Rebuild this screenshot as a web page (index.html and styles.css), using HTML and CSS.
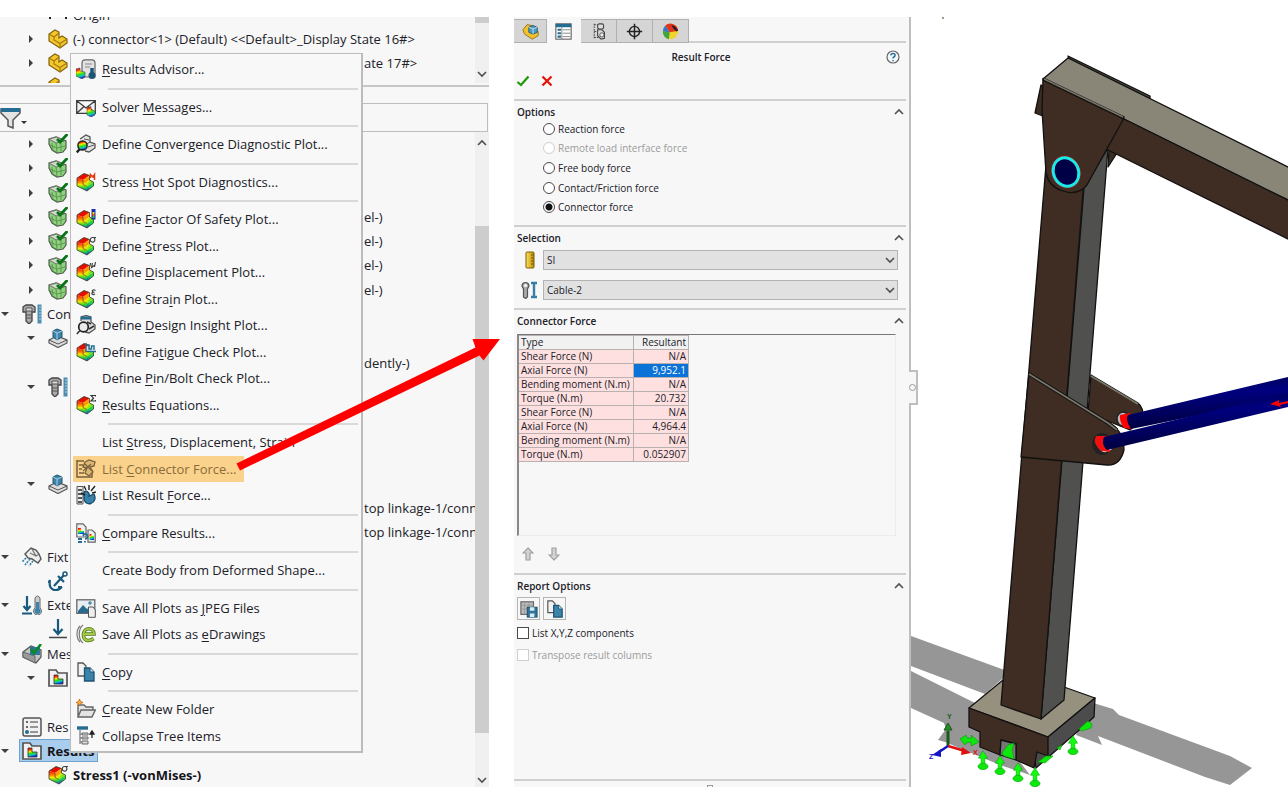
FILE: index.html
```html
<!DOCTYPE html>
<html lang="en">
<head>
<meta charset="utf-8">
<meta name="viewport" content="width=device-width, initial-scale=1">
<title>Result Force</title>
<link rel="stylesheet" href="styles.css">
</head>
<body>
<svg class="sprite" width="0" height="0" aria-hidden="true">
  <defs>
    <linearGradient id="rain" x1="0" y1="0" x2="0.25" y2="1">
      <stop offset="0.05" stop-color="#e80c00"/><stop offset="0.25" stop-color="#ff3c00"/><stop offset="0.42" stop-color="#ffe600"/><stop offset="0.64" stop-color="#27e01c"/><stop offset="0.82" stop-color="#14c8b4"/><stop offset="1" stop-color="#1238e0"/>
    </linearGradient>
    <linearGradient id="rain-side" x1="0" y1="0" x2="0" y2="1">
      <stop offset="0" stop-color="#f01400"/><stop offset="0.3" stop-color="#ff7a00"/><stop offset="0.5" stop-color="#f4e600"/><stop offset="0.75" stop-color="#2bd62b"/><stop offset="1" stop-color="#1050d8"/>
    </linearGradient>
    <linearGradient id="rain-step" x1="0" y1="0" x2="1" y2="0.4">
      <stop offset="0" stop-color="#ffe600"/><stop offset="0.5" stop-color="#d8ee00"/><stop offset="1" stop-color="#2fd81e"/>
    </linearGradient>
    <linearGradient id="rain-front" x1="0" y1="0" x2="0" y2="1">
      <stop offset="0" stop-color="#52e000"/><stop offset="0.5" stop-color="#14cf5a"/><stop offset="1" stop-color="#1238e0"/>
    </linearGradient>
    <linearGradient id="gold" x1="0" y1="0" x2="1" y2="0"><stop offset="0" stop-color="#ffe45c"/><stop offset="1" stop-color="#b98a00"/></linearGradient>
    <linearGradient id="cable" x1="0" y1="0" x2="0.2" y2="1"><stop offset="0" stop-color="#000046"/><stop offset="0.4" stop-color="#000080"/><stop offset="1" stop-color="#00003c"/></linearGradient>
  </defs>
  <symbol id="right" viewBox="0 0 8 8"><path d="M2 0 6 4 2 8Z" fill="#404040"/></symbol>
  <symbol id="down" viewBox="0 0 8 8"><path d="M0 2H8L4 6Z" fill="#404040"/></symbol>
  <symbol id="chev-up" viewBox="0 0 10 10"><path d="M1 7 5 3 9 7" fill="none" stroke="#505050" stroke-width="1.600"/></symbol>
  <symbol id="chev-down" viewBox="0 0 10 10"><path d="M1 3 5 7 9 3" fill="none" stroke="#505050" stroke-width="1.600"/></symbol>
  <symbol id="cube" viewBox="0 0 20 20">
    <path d="M1 6 8 1.500 13.500 3.500 7 8Z" fill="#e80c00"/>
    <path d="M1 6 7 8V12.500L11 14.500V19L1 14Z" fill="url(#rain-side)"/>
    <path d="M7 8 13.500 3.500V8L7 12.500Z" fill="#ff9a00"/>
    <path d="M7 12.500 13.500 8 17.500 10 11 14.500Z" fill="url(#rain-step)"/>
    <path d="M11 14.500 17.500 10V14L11 19Z" fill="url(#rain-front)"/>
    <path d="M1 6 8 1.500 13.500 3.500V8L17.500 10V14L11 19 1 14Z" fill="none" stroke="#3a3a2a" stroke-width="0.800"/>
    <path d="M7 8V12.500L11 14.500" fill="none" stroke="#55480a" stroke-width="0.700"/>
  </symbol>
  <symbol id="cube-safety" viewBox="0 0 20 20"><use href="#cube"/><rect x="15.500" y="0" width="4" height="10.500" fill="#1a2fb0"/><path d="M16.500 3h2v2h-2z" fill="#ffd000"/><path d="M16.500 5h2v2h-2z" fill="#ff5a00"/><path d="M16.500 7h2v2h-2z" fill="#3c3"/></symbol>
  <symbol id="cube-sigma" viewBox="0 0 20 20"><use href="#cube"/><path d="M20 1.500H16.500A2.300 2.300 0 1 0 18 2" fill="none" stroke="#444" stroke-width="1.200"/></symbol>
  <symbol id="cube-u" viewBox="0 0 20 20"><use href="#cube"/><path d="M14.500 1 14 4.500M16.500 1 15.500 5.500 19 3M19.500 0 18.500 5" fill="none" stroke="#444" stroke-width="1.200"/></symbol>
  <symbol id="cube-e" viewBox="0 0 20 20"><use href="#cube"/><path d="M19.500 1.500C17 0 15 2 17.500 3.200 14.500 3.800 16 6.500 19 5" fill="none" stroke="#444" stroke-width="1.200"/></symbol>
  <symbol id="cube-sum" viewBox="0 0 20 20"><use href="#cube"/><path d="M19.500 1.500V.500H15L17.500 3.200 15 6H19.500V5" fill="none" stroke="#333" stroke-width="1.200"/></symbol>
  <symbol id="cube-hot" viewBox="0 0 20 20"><use href="#cube"/><path d="M14.500 6V2.500L17 5 18.500 2.500V8" fill="none" stroke="#e33a12" stroke-width="1.500"/></symbol>
  <symbol id="cube-fatigue" viewBox="0 0 20 20"><use href="#cube"/><path d="M10 1V10H20V4H10Z" fill="#e4eef3" opacity=".85"/><path d="M10 1V9.500H20M11 3H13V7H15.500V4H18V8" fill="none" stroke="#246c91" stroke-width="1.400"/></symbol>
  <symbol id="advisor" viewBox="0 0 20 20"><path d="M6 18V4Q6 .8 9 .8H16Q19 .8 19 4V18Z" fill="#e2e2e2" stroke="#666" stroke-width="1.200"/><path d="M9 5H16M9 8H14" stroke="#888"/><path d="M16 9V16" stroke="#1d5674" stroke-width="3.500"/><circle cx="16" cy="16.500" r="3.500" fill="#1d5674"/><path d="M0 10 4 9V12L9 13 9 18 6 20 0 17Z" fill="url(#rain)" stroke="#444" stroke-width=".6"/></symbol>
  <symbol id="mail" viewBox="0 0 20 20"><path d="M.7 3.700H19.300V16.300H.7ZM.7 3.700 10 11 19.300 3.700M.7 16.300 8 9.500M19.300 16.300 12 9.500" fill="#f2f2f2" stroke="#3d3d3d" stroke-width="1.300"/><path d="M11 11 15 9.500V13L19 14V18L15 20 11 18Z" fill="url(#rain)" stroke="#444" stroke-width=".5"/></symbol>
  <symbol id="converge" viewBox="0 0 20 20"><path d="M4 5 10 1 14 3V8L19 10V14L13 18 9 17" fill="#e3e3e3" stroke="#555" stroke-width="1.300"/><path d="M8 5 13 6M14 8 9 11M12 13 18 11" stroke="#555"/><circle cx="6.500" cy="11.500" r="4.600" fill="url(#rain)" stroke="#222" stroke-width="1.500"/><path d="M3.800 15 .8 18.500" stroke="#222" stroke-width="2.400"/></symbol>
  <symbol id="insight" viewBox="0 0 20 20"><path d="M5 6 5 2 10 .5 15 2V7L19 10V14L13 18 9 17" fill="#ddd" stroke="#555" stroke-width="1.300"/><path d="M5 3H15" stroke="#246c91" stroke-width="3"/><circle cx="7.500" cy="12" r="4.800" fill="#eaeaea" stroke="#222" stroke-width="1.700"/><path d="M4 15.500.8 19M11 7 15 9M13 14 18 11" stroke="#333" stroke-width="1.500"/></symbol>
  <symbol id="list-conn" viewBox="0 0 20 20"><path d="M1 2H8M1 1V18H16V14M3 6H7M3 10H6M3 14H8" fill="none" stroke="#75603a" stroke-width="1.500"/><path d="M9 3 13 1 19 3 18 7 14 8 17 13 13 17 9 14 11 9 7 8Z" fill="#e0b873" stroke="#75603a" stroke-width="1.300"/><path d="M7 12 15 5M9 5 16 12" stroke="#75603a" stroke-width="1.200"/></symbol>
  <symbol id="list-result" viewBox="0 0 20 20"><path d="M1 1.500H7V19H1Z" fill="#eee" stroke="#555"/><path d="M2 5H6M2 9H6M2 13H6M2 17H6" stroke="#222" stroke-width="1.500"/><path d="M8 7C11 4 14 9 13 11L18 9C20 13 19 17 15 18.500 11 19.500 8 17 8 14Z" fill="#3680ab" stroke="#174b68" stroke-width="1.300"/><path d="M8 1 10 5M13 0V5M19 1 15 6M5 8 9 10M20 7 16 8" stroke="#222" stroke-width="1.400"/></symbol>
  <symbol id="compare" viewBox="0 0 20 20"><path d="M.8.8H7L10 4V14H.8ZM12 7H16L19.200 10V19.200H12Z" fill="#eee" stroke="#666" stroke-width="1.200"/><path d="M2 5H5V8H8V11H2Z" fill="url(#rain)"/><path d="M13.500 11H15.500V13H18V17H13.500Z" fill="url(#rain)"/><path d="M7 13Q9 9 11 12T9 16M9 18V19.500M2 16H6M2 19H6" fill="none" stroke="#246c91" stroke-width="1.800"/></symbol>
  <symbol id="picture" viewBox="0 0 20 20"><rect x=".8" y="1.800" width="18" height="13.500" fill="#e6eef2" stroke="#666" stroke-width="1.300"/><path d="M2 13 7 7 11 11 14 9V15H2Z" fill="#286a8e"/><path d="M14 3V7M12 5H16" stroke="#286a8e"/><path d="M12.500 9H17L19.300 12V19.300H12.500Z" fill="#eee" stroke="#555"/></symbol>
  <symbol id="edraw" viewBox="0 0 20 20"><path d="M4 2C0 6 0 14 4 18M7 1C2 5 2 15 7 19" fill="none" stroke="#777" stroke-width="1.200"/><path d="M8 10H18C18 3 8 3 7.500 10S13 18 17.500 14.500" fill="none" stroke="#527a19" stroke-width="3.600"/><path d="M8 10H18C18 3 8 3 7.500 10S13 18 17.500 14.500" fill="none" stroke="#a3c94c" stroke-width="2"/></symbol>
  <symbol id="copy" viewBox="0 0 20 20"><path d="M2 1H7L10 4V14H2Z" fill="#f1f1f1" stroke="#555" stroke-width="1.300"/><path d="M8.500 6H14L18 10V19H8.500Z" fill="#3b83aa" stroke="#1d5370" stroke-width="1.300"/><path d="M14 6V10H18" fill="#cfe4ef" stroke="#1d5370"/></symbol>
  <symbol id="folder" viewBox="0 0 20 20"><path d="M2 18V6H8L10 8H17V11M2 18 5 11H19.300L16 18Z" fill="#e3e3e3" stroke="#666" stroke-width="1.400"/><path d="M3.500 0 4.500 2.500 7 3.500 4.500 4.500 3.500 7 2.500 4.500 0 3.500 2.500 2.500Z" fill="#ffb22e" stroke="#bc631b" stroke-width=".8"/></symbol>
  <symbol id="collapse" viewBox="0 0 20 20"><path d="M1 2H12" stroke="#246c91" stroke-width="3.400"/><path d="M4 4V18M4 8H11M4 12H11M4 16H11" stroke="#777" stroke-width="1.200"/><path d="M6 7H12V9H6ZM6 11H12V13H6ZM6 15H12V18H6Z" fill="#ddd" stroke="#666"/><path d="M16 12V6M14 8 16 5 18 8Z" stroke="#222" stroke-width="1.300"/></symbol>
  <symbol id="part" viewBox="0 0 20 20"><path d="M1 8V5L7 1 11 3V9L14 7 19 10V14L12 19 1 12Z" fill="#f6c72c" stroke="#81620b" stroke-width="1.200"/><path d="M1 5 6 8 11 4M6 8V11L12 14.500 19 10M12 14.500V19" fill="none" stroke="#a17b10" stroke-width="1.200"/></symbol>
  <symbol id="origin" viewBox="0 0 20 20"><path d="M2 10H18M2 6V14M18 6V14" stroke="#222" stroke-width="2"/></symbol>
  <symbol id="body" viewBox="0 0 20 20"><path d="M1 5 8 3 18 7V14L15 18 9 19 4 16 1 10Z" fill="#8fd07f" stroke="#4f5e4b" stroke-width="1.200"/><path d="M1 5 9 3 16 7 8 9Z" fill="#cfd8cb" stroke="#6a7566"/><path d="M4 9 5 15M8 9 9 18M13 8V17M2 11 9 14 17 12" fill="none" stroke="#5c9a50" stroke-width="1"/><path d="M9 5 12 8 19.500 0" fill="none" stroke="#077516" stroke-width="2.800"/></symbol>
  <symbol id="bolt" viewBox="0 0 20 20"><path d="M1 3 4 1H10L13 3V8H10V17L7 20 4 17V8H1Z" fill="#aaa" stroke="#444" stroke-width="1.300"/><path d="M4 4H10V7H4ZM4 11H10M4 14H10" fill="#ddd" stroke="#555"/><path d="M17.500.5V19.500" stroke="#4c8db0" stroke-width="4"/><path d="M17 3H19M17 6H19M17 9H19M17 12H19M17 15H19" stroke="#add4e5"/></symbol>
  <symbol id="stamp" viewBox="0 0 20 20"><path d="M1 12 9 8 19 12V15L10 19.500 1 15Z" fill="#ddd" stroke="#555" stroke-width="1.200"/><path d="M1 12 10 16 19 12" fill="none" stroke="#555"/><path d="M5 3 9 1 14 3V9L9 12 5 9Z" fill="#3f83a8" stroke="#1d5370"/><path d="M5 3 9 5 14 3M9 5V12" fill="none" stroke="#a8d1e4"/></symbol>
  <symbol id="fixture" viewBox="0 0 20 20"><path d="M3 7 9 1 14 3 17 7 19 12 16 16 10 12 6 11Z" fill="#eee" stroke="#555" stroke-width="1.400"/><path d="M8 6 14 9M10 2 14 9 17 7" fill="none" stroke="#777" stroke-width="1.300"/><path d="M4 11 0 15M8 12 3 18M11 14 7 19" stroke="#3b83aa" stroke-width="1.700" stroke-dasharray="2 1"/></symbol>
  <symbol id="anchor" viewBox="0 0 20 20"><path d="M16 4 6 15M10 5 16 11M2 9C0 19 8 22 14 16M2 9 .5 12M14 16H10" fill="none" stroke="#175a7d" stroke-width="2.200"/><circle cx="17" cy="3" r="2" fill="none" stroke="#175a7d" stroke-width="1.500"/></symbol>
  <symbol id="loads" viewBox="0 0 20 20"><path d="M5 1V15M1.500 11 5 15 8.500 11M0 18.500H10" fill="none" stroke="#175a7d" stroke-width="2.200"/><path d="M13 3Q15.500-1 18 3V13A4 4 0 1 1 13 13Z" fill="#ccc" stroke="#666"/><path d="M15.500 7V16" stroke="#3b83aa" stroke-width="3"/><circle cx="15.500" cy="16" r="3" fill="#3b83aa"/></symbol>
  <symbol id="arrow-load" viewBox="0 0 20 20"><path d="M10 0V15M5.500 10 10 15 14.500 10" fill="none" stroke="#175a7d" stroke-width="2.200"/><path d="M1 18.500H19" stroke="#444" stroke-width="1.500"/></symbol>
  <symbol id="mesh" viewBox="0 0 20 20"><path d="M1 8 9 2 19 6V13L14 19 1 13Z" fill="#c4c4c4" stroke="#555" stroke-width="1.200"/><path d="M1 8 13 12V19L1 13Z" fill="#9a9a9a" stroke="#666"/><path d="M8 3H18V11H8Z" fill="#2f7599"/><path d="M9 5 12 9 19 0" fill="none" stroke="#0c8a24" stroke-width="2.600"/></symbol>
  <symbol id="resfolder" viewBox="0 0 20 20"><path d="M1 18V2H8L10 5H19V18Z" fill="#f1f1f1" stroke="#555" stroke-width="1.700"/><path d="M6 7H10V11H15V16H6Z" fill="url(#rain)" stroke="#333" stroke-width=".8"/></symbol>
  <symbol id="reslist" viewBox="0 0 20 20"><rect x="1" y="1" width="18" height="18" rx="2" fill="#f1f1f1" stroke="#555" stroke-width="1.500"/><path d="M8 5H16M8 10H16M8 15H16" stroke="#777" stroke-width="1.500"/><path d="M4 4H6V6H4ZM4 9H6V11H4Z" fill="#666"/><circle cx="5" cy="15" r="2" fill="#246c91"/></symbol>
  <symbol id="tab-part" viewBox="0 0 20 20"><path d="M1 8 6 2 12 3 16 9 19 10V15L12 19 3 13Z" fill="#f2c22e" stroke="#8a6a0c"/><path d="M8 5 13 3 18 5V11L13 13 8 11Z" fill="#4a9bc4" stroke="#1d5370"/><path d="M8 5 13 7 18 5M13 7V13" fill="none" stroke="#d0e8f3"/></symbol>
  <symbol id="tab-prop" viewBox="0 0 20 20"><rect x="1" y="1" width="18" height="18" fill="#fff" stroke="#555" stroke-width="1.200"/><path d="M1 3H19" stroke="#246c91" stroke-width="4"/><path d="M3 8H7M3 12H7M3 16H7" stroke="#246c91" stroke-width="2.500"/><path d="M9 8H18M9 12H18M9 16H18M8 5V19" stroke="#777"/></symbol>
  <symbol id="tab-conf" viewBox="0 0 20 20"><path d="M5 1V19M5 2H9M5 10H9M5 17H10" stroke="#555" stroke-width="1.300" stroke-dasharray="2 1"/><rect x="9" y="1" width="7" height="6" rx="2" fill="#ddd" stroke="#444" stroke-width="1.300"/><path d="M9 8H14L17 11V18L13 19 9 15Z" fill="#ddd" stroke="#444" stroke-width="1.300"/><circle cx="14" cy="14" r="2.500" fill="#eee" stroke="#444"/></symbol>
  <symbol id="tab-dim" viewBox="0 0 20 20"><circle cx="10" cy="10" r="6" fill="none" stroke="#222" stroke-width="1.700"/><path d="M10 1V19M1 10H19" stroke="#222" stroke-width="1.800"/></symbol>
  <symbol id="tab-color" viewBox="0 0 20 20"><circle cx="10" cy="10" r="9" fill="#f2d32e"/><path d="M9 11 4 3A9 9 0 0 0 1 10Z" fill="#3478c9"/><path d="M9 11 4 3A9 9 0 0 1 19 9Z" fill="#e2331f"/><path d="M9 11 1 10A9 9 0 0 0 8 19Z" fill="#3fa63c"/><path d="M11 3Q15 2 19 9L17 10Q14 8 11 3Z" fill="#222"/></symbol>
  <symbol id="save" viewBox="0 0 20 20"><rect x="1" y="2" width="14" height="14" fill="#bbb" stroke="#666" stroke-width="1.300"/><path d="M1 6H15M1 10H15M5 2V16M10 2V16" stroke="#999"/><rect x="8" y="8" width="11" height="11" fill="#2f7599" stroke="#174b68"/><path d="M11 8H16V12H11ZM11 15H16V19H11Z" fill="#dcebf3"/></symbol>
  <symbol id="fix-up" viewBox="-7 -12 14 24"><path d="M0-10 5-2H2V6H-2V-2H-5Z" fill="#0dff0d" stroke="#079a07" stroke-width=".6"/><ellipse cy="7" rx="5.500" ry="3.500" fill="#0ce80c" stroke="#079a07" stroke-width=".6"/></symbol>
</svg>

<main class="workspace">
  <section class="study" aria-label="Study tree">
    <div class="assembly">
      <ul class="assembly-rows">
        <li class="row l2"><span class="toggle"></span><svg class="ico"><use href="#origin"/></svg><span>Origin</span></li>
        <li class="row l2"><svg class="toggle"><use href="#right"/></svg><svg class="ico"><use href="#part"/></svg><span>(-) connector&lt;1&gt; (Default) &lt;&lt;Default&gt;_Display State 16#&gt;</span></li>
        <li class="row l2"><svg class="toggle"><use href="#right"/></svg><svg class="ico"><use href="#part"/></svg><span class="tail">ate 17#&gt;</span></li>
        <li class="row l2"><span class="toggle"></span><svg class="ico"><use href="#part"/></svg></li>
      </ul>
      <div class="scroll scroll-top"><span class="thumb"></span><svg class="chev"><use href="#chev-down"/></svg></div>
    </div>
    <div class="splitter"></div>
    <div class="filter">
      <button class="filter-btn" type="button" aria-label="Filter"><svg class="funnel" viewBox="0 0 28 22"><path d="M1 2H20V6L13 13V21L8 19V13L1 6Z" fill="#e4e4e4" stroke="#555" stroke-width="1.500"/><path d="M1 3H20" stroke="#246c91" stroke-width="4"/><path d="M21 14H27L24 17Z" fill="#333"/></svg></button>
      <input class="filter-text" type="text" aria-label="Filter tree">
    </div>
    <div class="tree">
      <ul class="tree-rows">
        <li class="row l2"><svg class="toggle"><use href="#right"/></svg><svg class="ico"><use href="#body"/></svg></li>
        <li class="row l2"><svg class="toggle"><use href="#right"/></svg><svg class="ico"><use href="#body"/></svg></li>
        <li class="row l2"><svg class="toggle"><use href="#right"/></svg><svg class="ico"><use href="#body"/></svg></li>
        <li class="row l2"><svg class="toggle"><use href="#right"/></svg><svg class="ico"><use href="#body"/></svg><span class="tail">el-)</span></li>
        <li class="row l2"><svg class="toggle"><use href="#right"/></svg><svg class="ico"><use href="#body"/></svg><span class="tail">el-)</span></li>
        <li class="row l2"><svg class="toggle"><use href="#right"/></svg><svg class="ico"><use href="#body"/></svg><span class="tail">el-)</span></li>
        <li class="row l2"><svg class="toggle"><use href="#right"/></svg><svg class="ico"><use href="#body"/></svg><span class="tail">el-)</span></li>
        <li class="row l1"><svg class="toggle"><use href="#down"/></svg><svg class="ico"><use href="#bolt"/></svg><span>Con</span></li>
        <li class="row l2"><svg class="toggle"><use href="#down"/></svg><svg class="ico"><use href="#stamp"/></svg></li>
        <li class="row l2"><span class="toggle"></span><span class="ico"></span><span class="tail">dently-)</span></li>
        <li class="row l2"><svg class="toggle"><use href="#down"/></svg><svg class="ico"><use href="#bolt"/></svg></li>
        <li class="row"></li>
        <li class="row"></li>
        <li class="row"></li>
        <li class="row l2"><svg class="toggle"><use href="#down"/></svg><svg class="ico"><use href="#stamp"/></svg></li>
        <li class="row l2"><span class="toggle"></span><span class="ico"></span><span class="tail">top linkage-1/conn</span></li>
        <li class="row l2"><span class="toggle"></span><span class="ico"></span><span class="tail">top linkage-1/conn</span></li>
        <li class="row l1"><svg class="toggle"><use href="#down"/></svg><svg class="ico"><use href="#fixture"/></svg><span>Fixt</span></li>
        <li class="row l2"><span class="toggle"></span><svg class="ico"><use href="#anchor"/></svg></li>
        <li class="row l1"><svg class="toggle"><use href="#down"/></svg><svg class="ico"><use href="#loads"/></svg><span>Exte</span></li>
        <li class="row l2"><span class="toggle"></span><svg class="ico"><use href="#arrow-load"/></svg></li>
        <li class="row l1"><svg class="toggle"><use href="#down"/></svg><svg class="ico"><use href="#mesh"/></svg><span>Mes</span></li>
        <li class="row l2"><svg class="toggle"><use href="#down"/></svg><svg class="ico"><use href="#resfolder"/></svg></li>
        <li class="row"></li>
        <li class="row l1"><span class="toggle"></span><svg class="ico"><use href="#reslist"/></svg><span>Res</span></li>
        <li class="row l1"><svg class="toggle"><use href="#down"/></svg><span class="picked"><svg class="ico"><use href="#resfolder"/></svg><span>Results</span></span></li>
        <li class="row l2 strong"><span class="toggle"></span><svg class="ico"><use href="#cube-sigma"/></svg><span>Stress1 (-vonMises-)</span></li>
      </ul>
      <div class="scroll scroll-main"><svg class="chev"><use href="#chev-up"/></svg><div class="track"><span class="gap-top"></span><span class="thumb"></span><span class="gap-bottom"></span></div><svg class="chev"><use href="#chev-down"/></svg></div>
    </div>

    <div class="menu" role="menu">
      <button class="item" role="menuitem" type="button"><svg class="mico"><use href="#advisor"/></svg><span><u>R</u>esults Advisor...</span></button>
      <hr>
      <button class="item" role="menuitem" type="button"><svg class="mico"><use href="#mail"/></svg><span>Solver <u>M</u>essages...</span></button>
      <hr>
      <button class="item" role="menuitem" type="button"><svg class="mico"><use href="#converge"/></svg><span>Define C<u>o</u>nvergence Diagnostic Plot...</span></button>
      <hr>
      <button class="item" role="menuitem" type="button"><svg class="mico"><use href="#cube-hot"/></svg><span>Stress <u>H</u>ot Spot Diagnostics...</span></button>
      <hr>
      <button class="item" role="menuitem" type="button"><svg class="mico"><use href="#cube-safety"/></svg><span>Define <u>F</u>actor Of Safety Plot...</span></button>
      <button class="item" role="menuitem" type="button"><svg class="mico"><use href="#cube-sigma"/></svg><span>Define <u>S</u>tress Plot...</span></button>
      <button class="item" role="menuitem" type="button"><svg class="mico"><use href="#cube-u"/></svg><span>Define <u>D</u>isplacement Plot...</span></button>
      <button class="item" role="menuitem" type="button"><svg class="mico"><use href="#cube-e"/></svg><span>Define Stra<u>i</u>n Plot...</span></button>
      <button class="item" role="menuitem" type="button"><svg class="mico"><use href="#insight"/></svg><span>Define <u>D</u>esign Insight Plot...</span></button>
      <button class="item" role="menuitem" type="button"><svg class="mico"><use href="#cube-fatigue"/></svg><span>Define Fa<u>t</u>igue Check Plot...</span></button>
      <button class="item" role="menuitem" type="button"><span class="mico"></span><span>Define <u>P</u>in/Bolt Check Plot...</span></button>
      <button class="item" role="menuitem" type="button"><svg class="mico"><use href="#cube-sum"/></svg><span><u>R</u>esults Equations...</span></button>
      <hr>
      <button class="item" role="menuitem" type="button"><span class="mico"></span><span>List <u>S</u>tress, Displacement, Strain</span></button>
      <button class="item marked" role="menuitem" type="button"><svg class="mico"><use href="#list-conn"/></svg><span>List <u>C</u>onnector Force...</span></button>
      <button class="item" role="menuitem" type="button"><svg class="mico"><use href="#list-result"/></svg><span>List Result <u>F</u>orce...</span></button>
      <hr>
      <button class="item" role="menuitem" type="button"><svg class="mico"><use href="#compare"/></svg><span><u>C</u>ompare Results...</span></button>
      <hr>
      <button class="item" role="menuitem" type="button"><span class="mico"></span><span>Create Body from Deformed Shape...</span></button>
      <hr>
      <button class="item" role="menuitem" type="button"><svg class="mico"><use href="#picture"/></svg><span>Save All Plots as <u>J</u>PEG Files</span></button>
      <button class="item" role="menuitem" type="button"><svg class="mico"><use href="#edraw"/></svg><span>Save All Plots as <u>e</u>Drawings</span></button>
      <hr>
      <button class="item" role="menuitem" type="button"><svg class="mico"><use href="#copy"/></svg><span><u>C</u>opy</span></button>
      <hr>
      <button class="item" role="menuitem" type="button"><svg class="mico"><use href="#folder"/></svg><span><u>C</u>reate New Folder</span></button>
      <button class="item" role="menuitem" type="button"><svg class="mico"><use href="#collapse"/></svg><span>Collapse Tree Items</span></button>
    </div>
    <svg class="pointer" viewBox="236 336 266 136" aria-hidden="true"><path d="M236.500 463.500 475.500 347.500 472.500 339H500L483.500 360.500 479.500 355.500 240 470.500Z" fill="#f00"/></svg>
  </section>

  <section class="props" aria-label="Result Force">
    <nav class="tabs">
      <button class="tab" type="button" aria-label="Model"><svg><use href="#tab-part"/></svg></button>
      <button class="tab active" type="button" aria-label="Properties"><svg><use href="#tab-prop"/></svg></button>
      <button class="tab" type="button" aria-label="Configurations"><svg><use href="#tab-conf"/></svg></button>
      <button class="tab" type="button" aria-label="Dimensions"><svg><use href="#tab-dim"/></svg></button>
      <button class="tab" type="button" aria-label="Appearance"><svg><use href="#tab-color"/></svg></button>
    </nav>
    <header class="head">
      <h1>Result Force</h1>
      <button class="help" type="button" aria-label="Help"><svg viewBox="0 0 14 14"><circle cx="7" cy="7" r="6" fill="#f4f8fa" stroke="#666" stroke-width="1.200"/><path d="M4.800 5.300Q5 3.400 7 3.400T9.100 5.200Q9.100 6.300 7.800 7 7 7.500 7 8.500M7 10V11.300" fill="none" stroke="#2a7096" stroke-width="1.500"/></svg></button>
    </header>
    <div class="confirm">
      <button type="button" aria-label="OK"><svg viewBox="0 0 14 12"><path d="M1.500 7 5 10 12.500 1.500" fill="none" stroke="#219a0b" stroke-width="2.300"/></svg></button>
      <button type="button" aria-label="Cancel"><svg viewBox="0 0 14 12"><path d="M2.500 1.500 11.500 10.500M11.500 1.500 2.500 10.500" stroke="#e3160c" stroke-width="2.300"/></svg></button>
    </div>

    <section class="group">
      <h2>Options<svg><use href="#chev-up"/></svg></h2>
      <div class="radios">
        <label><input type="radio" name="force">Reaction force</label>
        <label class="off"><input type="radio" name="force" disabled>Remote load interface force</label>
        <label><input type="radio" name="force">Free body force</label>
        <label><input type="radio" name="force">Contact/Friction force</label>
        <label><input type="radio" name="force" checked>Connector force</label>
      </div>
    </section>

    <section class="group">
      <h2>Selection<svg><use href="#chev-up"/></svg></h2>
      <div class="pick">
        <svg viewBox="0 0 18 18"><rect x="6" y="1" width="8" height="16" rx="1" fill="url(#gold)" stroke="#7a5c06"/><path d="M11 4H14M11 7H14M11 10H14M11 13H14" stroke="#7a5c06"/></svg>
        <span class="combo"><select aria-label="Units"><option>SI</option></select><svg><use href="#chev-down"/></svg></span>
      </div>
      <div class="pick">
        <svg viewBox="0 0 18 18"><path d="M2 5A3 3 0 1 1 9 5L7.500 8V16L5.500 17.500 3.500 16V8Z" fill="#aaa" stroke="#555" stroke-width="1.200"/><circle cx="5.500" cy="4.500" r="1.500" fill="#fff"/><path d="M11 2H17M11 16H17M14 2V16" stroke="#3680a5" stroke-width="2.400"/></svg>
        <span class="combo"><select aria-label="Connector"><option>Cable-2</option></select><svg><use href="#chev-down"/></svg></span>
      </div>
    </section>

    <section class="group">
      <h2>Connector Force<svg><use href="#chev-up"/></svg></h2>
      <div class="listbox">
        <table>
          <thead><tr><th>Type</th><th>Resultant</th></tr></thead>
          <tbody>
            <tr><td>Shear Force (N)</td><td>N/A</td></tr>
            <tr><td>Axial Force (N)</td><td class="sel">9,952.1</td></tr>
            <tr><td>Bending moment (N.m)</td><td>N/A</td></tr>
            <tr><td>Torque (N.m)</td><td>20.732</td></tr>
          </tbody>
          <tbody>
            <tr><td>Shear Force (N)</td><td>N/A</td></tr>
            <tr><td>Axial Force (N)</td><td>4,964.4</td></tr>
            <tr><td>Bending moment (N.m)</td><td>N/A</td></tr>
            <tr><td>Torque (N.m)</td><td>0.052907</td></tr>
          </tbody>
        </table>
      </div>
      <div class="movers">
        <button type="button" aria-label="Previous"><svg viewBox="0 0 12 14"><path d="M6 1 11 6H8V13H4V6H1Z" fill="#d4d4d4" stroke="#a0a0a0" stroke-width="1.200"/></svg></button>
        <button type="button" aria-label="Next"><svg viewBox="0 0 12 14"><path d="M6 13 11 8H8V1H4V8H1Z" fill="#d4d4d4" stroke="#a0a0a0" stroke-width="1.200"/></svg></button>
      </div>
    </section>

    <section class="group">
      <h2>Report Options<svg><use href="#chev-up"/></svg></h2>
      <div class="report-btns">
        <button type="button" aria-label="Save"><svg><use href="#save"/></svg></button>
        <button type="button" aria-label="Copy"><svg><use href="#copy"/></svg></button>
      </div>
      <label class="check"><input type="checkbox">List X,Y,Z components</label>
      <label class="check off"><input type="checkbox" disabled>Transpose result columns</label>
    </section>
    <footer class="foot"><span></span></footer>
    <button class="flap" type="button" aria-label="Collapse panel"></button>
  </section>

  <section class="view" aria-label="Model view">
    <svg class="model" viewBox="911 17 377 770" preserveAspectRatio="xMinYMin slice">
      <path d="M942 17h2v2h-2z" fill="#a89884"/>
      <g fill="#969696">
        <path d="M911 636 1010 672 985 694 911 666Z"/>
        <path d="M911 671 975 703 1030 775 1000 765 945 742 938 740 946 729 944 723 911 708Z"/>
        <path d="M1090 702 1113 709 1119 715 1230 756 1252 768 1230 785 1205 777 1098 736 1102 745 1076 735Z"/>
      </g>
      <g stroke="#111" stroke-width="1.300" stroke-linejoin="round">
        <path d="M1035 113 1041 85 1050 90 1048 118Z" fill="#3d2c22"/>
        <path d="M1109 150 1117 153 1108 167Z" fill="#3d2c22"/>
        <path d="M969 708 1003 680 1064 687 1095 698 1048 737Z" fill="#96907e"/>
        <path d="M1048 737 1095 698 1094 717 1036 768 1034 753Z" fill="#4c4c4c"/>
        <path d="M1034 768 1037 752 1048 756V737L969 708V727L980 732V747L1000 755 1001 740 1016 744V760Z" fill="#3f2c22"/>
        <path d="M1001 740 1016 744V760L1000 755Z" fill="#777"/>
        <path d="M1084 188 1108 148 1064 700 1041 719Z" fill="#50504e"/>
        <path d="M1046 165 1084 180 1041 719 1001 705Z" fill="#3f2c22"/>
        <path d="M1068 56 1150 96V100L1070 62Z" fill="#444338"/>
        <path d="M1043 79 1068 58 1290 168V201Z" fill="#898577"/>
        <path d="M1043 79 1290 201V240L1108 150Z" fill="#3f2c22"/>
        <path d="M1043 79 1124 118 1087 185Q1078 196 1063 191 1049 187 1046 173L1042 110Z" fill="#3f2c22"/>
        <path d="M1043 79 1124 118" stroke="#111" stroke-width="3.500"/><path d="M1044 79 1123 117" stroke="#777465" stroke-width="1.500"/>
        <path d="M1091 375 1138 403Q1144 408 1143 418L1130 430 1088 413Z" fill="#3f2c22"/>
        <path d="M1029 373 1108 422Q1124 430 1124 450 1120 466 1107 465L1021 457Z" fill="#3f2c22"/>
      </g>
      <path d="M1029 374 1108 423 1117 430" fill="none" stroke="#111" stroke-width="3.500"/><path d="M1029 374 1108 423 1117 430M1091 376 1138 404" fill="none" stroke="#77766b" stroke-width="1.700"/>
      <ellipse cx="1066" cy="172" rx="12.500" ry="14.500" transform="rotate(-25 1066 172)" fill="#000046" stroke="#762016" stroke-width="5"/>
      <ellipse cx="1066" cy="172" rx="12.500" ry="14.500" transform="rotate(-25 1066 172)" fill="#000046" stroke="#1de8e8" stroke-width="3"/>
      <ellipse cx="1123" cy="419" rx="6" ry="7" fill="#bbb" stroke="#222" stroke-width="1.500"/>
      <path d="M1120 415 1130 413 1133 429 1124 428Q1119 421 1120 415Z" fill="#f00"/>
      <path d="M1128 415 1288 377V397L1131 429Q1125 420 1128 415Z" fill="url(#cable)"/>
      <ellipse cx="1102" cy="444" rx="10" ry="11" fill="#222"/><path d="M1099 448Q1104 456 1112 449" fill="#fff"/>
      <path d="M1096 436 1107 436 1110 452 1101 451Q1092 443 1096 436Z" fill="#f01010"/>
      <path d="M1104 437 1288 393V407L1107 450Q1101 445 1104 437Z" fill="url(#cable)"/>
      <path d="M1270 404 1279 400V403L1288 401V403L1280 405 1281 407Z" fill="#f00"/>
      <g>
        <use href="#fix-up" x="976" y="749" width="14" height="22"/>
        <use href="#fix-up" x="993" y="754" width="14" height="22"/>
        <use href="#fix-up" x="1011" y="761" width="14" height="22"/>
        <use href="#fix-up" x="1028" y="766" width="14" height="22"/>
        <use href="#fix-up" x="1066" y="734" width="14" height="22"/>
        <path d="M960 739 966 735 967 738 972 738 971 735 979 742 971 746 971 742 966 743 965 745ZM1002 753 1008 745 1014 743 1012 750 1014 759 1004 756ZM1038 762 1046 756 1053 756 1045 763ZM1079 729 1088 721 1092 724 1091 728 1082 731ZM1057 748 1062 745 1060 750Z" fill="#0ce80c" stroke="#079a07" stroke-width=".6"/>
      </g>
      <path d="M948 746V731" stroke="#185c18" stroke-width="3"/><path d="M944 730 948 723 952 730Z" fill="#2a8a2a" stroke="#185c18"/>
      <path d="M948 746 965 751" stroke="#e01010" stroke-width="2.500"/><path d="M962 747 971 753 961 755Z" fill="#e01010"/>
      <path d="M948 746 939 752" stroke="#1515c8" stroke-width="2.500"/><path d="M941 749 932 755 941 757Z" fill="#1515c8"/>
      <text class="axis" x="947" y="719" fill="#185c18">Y</text>
      <text class="axis" x="973" y="755" fill="#e01010">X</text>
      <text class="axis" x="929" y="759" fill="#1515c8">Z</text>
    </svg>
  </section>
</main>
</body>
</html>
```

FILE: styles.css
```css
* { box-sizing: border-box; }

body {
  margin: 0;
  padding: 17px 0 20px;
  min-height: 100vh;
  display: flex;
  flex-direction: column;
  background: #fff;
  color: #202028;
  font-family: "Open Sans", "Noto Sans", sans-serif;
  font-size: 13px;
}

button, input, select { font: inherit; color: inherit; }
button { border: 0; background: none; padding: 0; }
ul { list-style: none; margin: 0; padding: 0; }
h1, h2 { margin: 0; font-weight: 600; font-size: 10px; }
svg { display: block; flex: none; }
.sprite { position: absolute; }

.workspace {
  flex: 1;
  display: grid;
  grid-template-columns: 489fr 25fr 397fr 377fr;
}

/* study tree */
.study {
  position: relative;
  display: flex;
  flex-direction: column;
  background: #f7f7f7;
  min-width: 0;
}

.assembly { height: 66px; display: flex; }
.assembly-rows {
  flex: 1;
  min-width: 0;
  padding-top: 2px;
  display: flex;
  flex-direction: column;
  justify-content: center;
  overflow: hidden;
}
.row {
  display: flex;
  align-items: center;
  gap: 5px;
  white-space: nowrap;
  line-height: 18px;
}
.assembly-rows .row { flex: 0 0 24px; }
.l1 { padding-left: 1px; }
.l2 { padding-left: 27px; }
.toggle { width: 8px; height: 8px; flex: none; }
.ico { width: 20px; height: 20px; flex: none; }
.l1 .toggle { margin-right: 8px; }
.l2 .toggle { margin-right: 8px; }
.strong, .picked { font-weight: 700; color: #15151a; }
.picked {
  display: flex;
  align-items: center;
  gap: 5px;
  height: 23px;
  padding: 0 3px 0 2px;
  margin-left: -3px;
  background: #a9cdec;
  border: 1px solid #6fa3cf;
}
.tail { padding-left: 291px; }

.scroll {
  width: 14px;
  flex: none;
  background: #f0f0f0;
  display: flex;
  flex-direction: column;
  align-items: center;
  justify-content: space-between;
}
.thumb { background: #cdcdcd; width: 100%; }
.scroll-top .thumb { height: 6px; }
.scroll-top .chev { margin-bottom: 4px; }
.chev { width: 10px; height: 10px; }
.scroll-main { padding: 6px 0 2px; }
.track { flex: 1; width: 100%; padding: 4px 0; display: flex; flex-direction: column; }
.track .gap-top { flex: 74; }
.track .thumb { flex: 506; }
.track .gap-bottom { flex: 38; }

.splitter {
  height: 18px;
  border-top: 2px solid #c6c6c6;
  margin-top: 2px;
}
.filter {
  height: 29px;
  border: 1px solid #bdbdbd;
  border-left: 0;
  margin-right: 1px;
  display: flex;
  align-items: center;
}
.filter-btn { width: 28px; }
.funnel { width: 28px; height: 22px; }
.filter-text { flex: 1; min-width: 0; border: 0; background: none; }

.tree { flex: 1; display: flex; min-height: 0; }
.tree-rows {
  flex: 1;
  min-width: 0;
  display: flex;
  flex-direction: column;
  overflow: hidden;
}
.tree-rows .row { flex: 1 0 24px; }

/* context menu */
.menu {
  position: absolute;
  left: 70px;
  top: 36px;
  bottom: 34px;
  width: 293px;
  padding: 2px 0;
  display: flex;
  flex-direction: column;
  background: #f8f8f8;
  border: 2px solid #bcbcbc;
  border-left-width: 1px;
  border-top-width: 1px;
}
.item {
  flex: 1 0 0;
  display: flex;
  align-items: center;
  gap: 6px;
  padding: 0 0 0 5px;
  text-align: left;
  white-space: nowrap;
  line-height: 18px;
}
.mico { width: 20px; height: 20px; flex: none; }
.item u { text-underline-offset: 2px; }
.menu hr {
  flex: none;
  width: auto;
  height: 2px;
  margin: 5px 3px 4px 37px;
  border: 0;
  background: #d9d9d9;
}
.marked {
  align-self: flex-start;
  margin-left: 2px;
  padding: 0 7px 0 3px;
  background: #fad28c;
  color: #8a6c3a;
}
.pointer {
  position: absolute;
  left: 236px;
  top: 319px;
  width: 266px;
  height: 136px;
  z-index: 2;
}

/* property panel */
.props {
  grid-column: 3;
  position: relative;
  z-index: 1;
  display: flex;
  flex-direction: column;
  padding-right: 3px;
  background: #f7f7f7;
  border-right: 2px solid #bebebe;
  font-size: 10px;
  font-weight: 500;
  line-height: 14px;
  min-width: 0;
}
.tabs {
  height: 26px;
  padding-top: 2px;
  display: flex;
  border-bottom: 2px solid #cfcfcf;
}
.tab {
  width: 36px;
  height: 24px;
  display: flex;
  align-items: center;
  justify-content: center;
  background: #d5d5d5;
  border: 1px solid #b0b0b0;
  border-left-width: 0;
}
.tab:first-child { width: 33px; }
.tab.active { width: 34px; background: #f7f7f7; border-color: #f7f7f7; }
.tab svg { width: 17px; height: 17px; }

.head {
  height: 28px;
  display: flex;
  align-items: center;
  padding: 0 6px 0 2px;
}
.head h1 { flex: 1; text-align: center; }
.help svg { width: 14px; height: 14px; }
.confirm { height: 28px; display: flex; align-items: flex-start; gap: 10px; padding: 4px 2px; }
.confirm svg { width: 14px; height: 12px; }

.group {
  border-top: 2px solid #cfcfcf;
  padding: 4px 2px 8px 3px;
}
.group h2 { display: flex; justify-content: space-between; align-items: center; height: 14px; }
.group h2 svg { width: 10px; height: 10px; }

.radios {
  display: grid;
  grid-auto-rows: 1fr;
  height: 98px;
  padding-left: 26px;
}
.radios label { display: flex; align-items: center; gap: 3px; }
.off { color: #9b9b9b; }
.radios input, .check input {
  appearance: none;
  width: 12px;
  height: 12px;
  margin: 0;
  border: 1px solid #4a4a4a;
  background: #fff;
}
.radios input { border-radius: 50%; }
.radios input:checked { background: radial-gradient(circle, #111 0 3px, #fff 4px); }
.radios input:disabled, .check input:disabled { border-color: #cfcfcf; }

.pick { display: flex; align-items: center; gap: 5px; height: 20px; margin: 5px 6px 0 3px; }
.pick + .pick { margin-top: 10px; }
.pick > svg { width: 18px; height: 18px; }
.combo { position: relative; flex: 1; }
.combo select {
  appearance: none;
  display: block;
  width: 100%;
  height: 20px;
  padding: 0 3px;
  border: 1px solid #b3b3b3;
  border-radius: 0;
  background: #e1e1e1;
}
.combo svg { position: absolute; right: 3px; top: 5px; width: 10px; height: 10px; }

.listbox {
  height: 202px;
  margin: 6px 8px 0 0;
  border: 1px solid #ececec;
  border-top-color: #777;
  border-left: 2px solid #8a8a8a;
}
table { width: 170px; border-collapse: collapse; border: 1px solid #777; border-left: 0; border-top: 0; }
th, td { height: 14px; padding: 0 2px; line-height: 13px; border: 1px solid #b9b0b0; text-align: left; white-space: nowrap; border-left: 0; }
th { background: #f1f1f1; font-weight: 500; }
td { background: #ffe0e0; }
th + th, td + td { width: 55px; text-align: right; }
tbody + tbody { border-top: 1px solid #777; }
td.sel { background: #0b73d8; color: #fff; }

.movers { display: flex; gap: 14px; padding: 11px 5px 4px; }
.movers svg { width: 12px; height: 14px; }

.report-btns { display: flex; gap: 3px; padding: 4px 0 6px; }
.report-btns button { width: 23px; height: 23px; border: 1px solid #b5b5b5; display: flex; align-items: center; justify-content: center; }
.report-btns svg { width: 18px; height: 18px; }
.check { display: flex; align-items: center; gap: 3px; height: 14px; margin-bottom: 8px; }

.foot { margin-top: auto; height: 8px; border-top: 2px solid #cfcfcf; display: flex; justify-content: center; align-items: flex-end; }
.foot span { width: 6px; height: 2px; border: 1px solid #999; border-bottom: 0; }

.flap {
  position: absolute;
  right: -9px;
  top: 353px;
  width: 9px;
  height: 35px;
  background: #f7f7f7;
  border: 2px solid #bebebe;
  border-left: 0;
  display: flex;
  align-items: center;
  justify-content: center;
}
.flap::before { content: ""; width: 5px; height: 5px; border: 1px solid #999; border-radius: 50%; }

/* model view */
.view { position: relative; min-width: 0; overflow: hidden; }
.model { position: absolute; inset: 0; width: 100%; height: 100%; }
.axis { font: 700 7px "Liberation Sans", sans-serif; }
```
